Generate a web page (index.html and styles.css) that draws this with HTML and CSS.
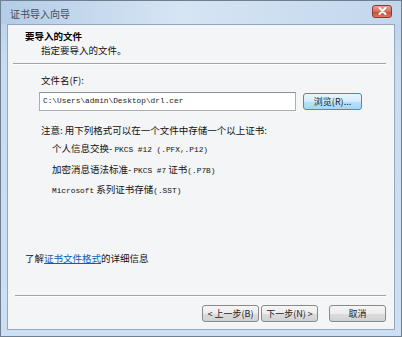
FILE: index.html
```html
<!DOCTYPE html>
<html lang="zh-CN">
<head>
    <meta charset="UTF-8">
    <title>证书导入向导</title>
    <link rel="stylesheet" href="styles.css">
</head>
<body>
    <div class="window">
        <div class="titlebar">
            <span class="title">证书导入向导</span>
            <span class="close">
                <svg width="9" height="8" viewBox="0 0 9 8"><path d="M1.5 1 L7.5 7 M7.5 1 L1.5 7" stroke="#fff" stroke-width="2" stroke-linecap="round"/></svg>
            </span>
        </div>
        <div class="client">
            <div class="header">
                <div class="h-title">要导入的文件</div>
                <div class="h-sub">指定要导入的文件。</div>
            </div>
            <div class="sep"></div>
            <div class="content">
                <div class="label">文件名(F):</div>
                <div class="file-row">
                    <div class="input">C:\Users\admin\Desktop\drl.cer</div>
                    <button class="btn browse">浏览(R)...</button>
                </div>
                <div class="note">注意: 用下列格式可以在一个文件中存储一个以上证书:</div>
                <ul class="formats">
                    <li>个人信息交换- <span class="mono">PKCS #12 (.PFX,.P12)</span></li>
                    <li>加密消息语法标准- <span class="mono">PKCS #7</span> 证书<span class="mono">(.P7B)</span></li>
                    <li><span class="mono">Microsoft</span> 系列证书存储<span class="mono">(.SST)</span></li>
                </ul>
                <div class="more">了解<a href="#">证书文件格式</a>的详细信息</div>
            </div>
            <div class="sep sep-bottom"></div>
            <div class="footer">
                <button class="btn">&lt; 上一步(B)</button>
                <button class="btn">下一步(N) &gt;</button>
                <button class="btn cancel">取消</button>
            </div>
        </div>
    </div>
</body>
</html>
```

FILE: styles.css
```css
body {
    margin: 0;
    padding: 0;
    background: #fff;
    font-family: "Noto Sans CJK SC", "Liberation Sans", sans-serif;
    font-size: 9.5px;
    color: #111;
}
.window {
    width: 402px;
    height: 337px;
    box-sizing: border-box;
    border: 1px solid #6f7f92;
    background: linear-gradient(to bottom, #b7cfe9 0px, #c9dcf0 60px, #cddff2 100%);
    padding: 0 6px 6px 6px;
    display: flex;
    flex-direction: column;
}
.titlebar {
    height: 23px;
    display: flex;
    align-items: center;
    justify-content: space-between;
    background: linear-gradient(to right, #b4cce6, #d6e5f4 45%, #c2d6ec);
    margin: 0 -6px;
    padding: 0 9px 0 9px;
}
.title {
    color: #3b4d63;
    font-size: 10px;
    margin-top: 1px;
}
.close {
    width: 20px;
    height: 13px;
    box-sizing: border-box;
    border: 1px solid #8e3a2f;
    border-radius: 3px;
    background: linear-gradient(to bottom, #e9a394, #d0705f 50%, #c2483a 51%, #d27a64);
    display: flex;
    align-items: center;
    justify-content: center;
    margin-top: -3px;
}
.client {
    flex: 1;
    background: #f4f5f6;
    border: 1px solid #93a7c0;
    display: flex;
    flex-direction: column;
}
.header {
    padding: 4px 0 0 17px;
    line-height: 14px;
}
.h-title {
    font-weight: bold;
    color: #000;
}
.h-sub {
    padding-left: 16px;
}
.sep {
    height: 1px;
    background: #a3a3a3;
    border-bottom: 1px solid #fff;
    margin: 6px 8px 0 5px;
}
.sep-bottom {
    margin: 0 8px 0 7px;
}
.content {
    flex: 1;
    display: flex;
    flex-direction: column;
    padding: 8px 0 30px 33px;
    line-height: 14px;
}
.file-row {
    display: flex;
    align-items: center;
    margin-top: 5px;
    margin-left: -2px;
}
.input {
    width: 257px;
    height: 19px;
    box-sizing: border-box;
    border: 1px solid #abadb3;
    border-top-color: #8e9096;
    background: #fff;
    font-family: "Liberation Mono", monospace;
    font-size: 7.8px;
    line-height: 17px;
    padding-left: 3px;
    color: #222;
}
.btn {
    height: 17px;
    width: 57px;
    box-sizing: border-box;
    padding: 0;
    border: 1px solid #8a8a8a;
    border-radius: 3px;
    background: linear-gradient(to bottom, #f6f6f6, #ececec 50%, #dcdcdc 51%, #d2d2d2);
    font-family: "Noto Sans CJK SC", sans-serif;
    font-size: 9px;
    color: #222;
}
.browse {
    width: 59px;
    margin-left: 7px;
    border-color: #4a8cc0;
    background: linear-gradient(to bottom, #e9f5fc, #d4ecfa 50%, #b9e0f8 51%, #a9d6f3);
}
.note {
    margin-top: 12px;
}
.formats {
    list-style-type: none;
    margin: 2px 0 0 0;
    padding: 0 0 0 11px;
}
.formats li {
    line-height: 18.5px;
}
.mono {
    font-family: "Liberation Mono", monospace;
    font-size: 7.8px;
}
.more {
    margin-top: auto;
    margin-left: -16px;
}
.more a {
    color: #0a5fb8;
    text-decoration: underline;
}
.footer {
    height: 32px;
    box-sizing: border-box;
    display: flex;
    justify-content: flex-end;
    align-items: flex-start;
    padding: 8px 8px 0 0;
    gap: 2px;
}
.footer .cancel {
    margin-left: 9px;
}
```
